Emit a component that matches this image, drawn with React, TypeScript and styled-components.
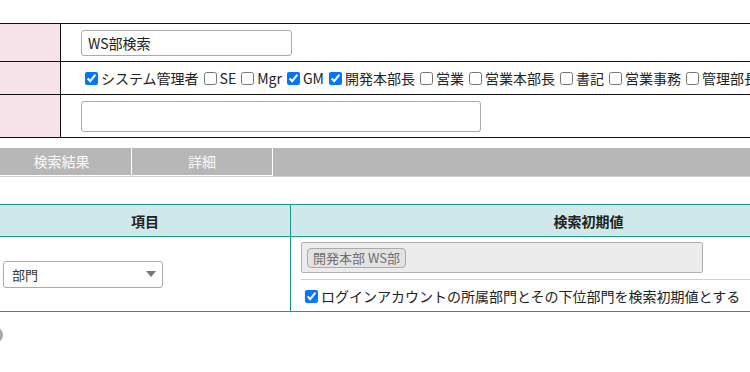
import styled, { createGlobalStyle } from 'styled-components';

const GlobalStyle = createGlobalStyle`
    html, body {
        margin: 0;
        padding: 0;
        width: 750px;
        height: 372px;
        overflow: hidden;
        background: #fff;
    }
    body {
        font-family: "Noto Sans CJK JP", "Noto Sans", sans-serif;
        font-size: 14px;
        color: #222;
    }
`;

const Page = styled.div`
    padding-top: 23px;
    width: 900px;
`;

const FormTable = styled.table`
    border-collapse: collapse;
    width: 900px;
`;

const Label = styled.th`
    width: 60px;
    padding: 0;
    background-color: #f6e3e9;
    border: 1px solid #111;
    border-left: none;
`;

const Field = styled.td<{ $h: number }>`
    height: ${props => props.$h}px;
    padding: 0 0 0 20px;
    border: 1px solid #111;
    border-right: none;
    vertical-align: middle;
`;

const TextInput = styled.input<{ $w: number; $h: number }>`
    box-sizing: border-box;
    display: block;
    width: ${props => props.$w}px;
    height: ${props => props.$h}px;
    padding: 0 6px;
    border: 1px solid #aaa;
    border-radius: 3px;
    font-family: "Noto Sans CJK JP", sans-serif;
    font-size: 14px;
    color: #222;
    outline: none;
`;

const CheckRow = styled.div`
    display: flex;
    align-items: center;
    white-space: nowrap;
    line-height: 18px;
`;

const Check = styled.label`
    display: inline-flex;
    align-items: center;
    margin-right: 1px;
`;

const Box = styled.input`
    width: 13px;
    height: 13px;
    margin: 0 3px 0 4px;
    accent-color: #0075ff;
`;

const TabBar = styled.div`
    display: flex;
    margin-top: 10px;
    height: 29px;
    background-color: #b7b7b7;
    border-bottom: 1px solid #d0d0d0;
    box-sizing: border-box;
`;

const Tab = styled.div<{ $w: number; $shift?: number }>`
    box-sizing: border-box;
    width: ${props => props.$w}px;
    height: 28px;
    padding-right: ${props => props.$shift ?? 0}px;
    line-height: 27px;
    text-align: center;
    color: #fafafa;
    font-size: 14px;
    border-right: 1px solid #fff;
    border-bottom: 1px solid #fff;
`;

const ResultTable = styled.table`
    margin-top: 27px;
    border-collapse: collapse;
    width: 886px;
`;

const HeadCell = styled.th<{ $w?: number }>`
    width: ${props => (props.$w ? `${props.$w}px` : 'auto')};
    height: 31px;
    padding: 0;
    background-color: #cfe9ea;
    border: 1px solid #199a8d;
    border-left: none;
    border-right-width: ${props => (props.$w ? '1px' : '0')};
    font-size: 14px;
    font-weight: bold;
    color: #222;
`;

const BodyCell = styled.td<{ $first?: boolean }>`
    height: 75px;
    padding: ${props => (props.$first ? '0 0 0 3px' : '5px 0 0 10px')};
    border: 1px solid #199a8d;
    border-left: none;
    border-right-width: ${props => (props.$first ? '1px' : '0')};
    vertical-align: ${props => (props.$first ? 'middle' : 'top')};
    box-sizing: border-box;
`;

const Select = styled.div`
    box-sizing: border-box;
    display: flex;
    align-items: center;
    justify-content: space-between;
    width: 160px;
    height: 27px;
    padding: 0 6px 0 8px;
    border: 1px solid #aaa;
    border-radius: 3px;
    font-size: 13px;
    color: #333;
`;

const Caret = styled.span`
    width: 0;
    height: 0;
    border-left: 5px solid transparent;
    border-right: 5px solid transparent;
    border-top: 6px solid #777;
`;

const TagBox = styled.div`
    box-sizing: border-box;
    display: flex;
    align-items: center;
    width: 402px;
    height: 31px;
    padding: 0 5px;
    background-color: #ececec;
    border: 1px solid #b0b0b0;
    border-radius: 2px;
`;

const Tag = styled.span`
    box-sizing: border-box;
    height: 20px;
    line-height: 18px;
    padding: 0 5px;
    border: 1px solid #aaa;
    border-radius: 4px;
    background-color: #e2e2e2;
    color: #707070;
    font-size: 13px;
`;

const Divider = styled.div`
    margin-top: 6px;
    border-top: 1px solid #cfcfcf;
`;

const DefaultCheck = styled.label`
    display: flex;
    align-items: center;
    margin-top: 8px;
    white-space: nowrap;
    line-height: 16px;
    font-size: 14px;
`;

const Knob = styled.div`
    margin: 15px 0 0 -13px;
    width: 16px;
    height: 16px;
    border-radius: 50%;
    background-color: #a8a8a8;
`;

const roles: [string, boolean][] = [
    ['システム管理者', true],
    ['SE', false],
    ['Mgr', false],
    ['GM', true],
    ['開発本部長', true],
    ['営業', false],
    ['営業本部長', false],
    ['書記', false],
    ['営業事務', false],
    ['管理部長', false],
];

const App = () => {
    return (
        <Page>
            <GlobalStyle />
            <FormTable>
                <tbody>
                    <tr>
                        <Label />
                        <Field $h={37}>
                            <TextInput $w={211} $h={26} defaultValue="WS部検索" />
                        </Field>
                    </tr>
                    <tr>
                        <Label />
                        <Field $h={32}>
                            <CheckRow>
                                {roles.map(([name, checked]) => (
                                    <Check key={name}>
                                        <Box type="checkbox" defaultChecked={checked} />
                                        {name}
                                    </Check>
                                ))}
                            </CheckRow>
                        </Field>
                    </tr>
                    <tr>
                        <Label />
                        <Field $h={42}>
                            <TextInput $w={400} $h={31} />
                        </Field>
                    </tr>
                </tbody>
            </FormTable>

            <TabBar>
                <Tab $w={132} $shift={8}>検索結果</Tab>
                <Tab $w={141}>詳細</Tab>
            </TabBar>

            <ResultTable>
                <thead>
                    <tr>
                        <HeadCell $w={290}>項目</HeadCell>
                        <HeadCell>検索初期値</HeadCell>
                    </tr>
                </thead>
                <tbody>
                    <tr>
                        <BodyCell $first>
                            <Select>
                                <span>部門</span>
                                <Caret />
                            </Select>
                        </BodyCell>
                        <BodyCell>
                            <TagBox>
                                <Tag>開発本部 WS部</Tag>
                            </TagBox>
                            <Divider />
                            <DefaultCheck>
                                <Box type="checkbox" defaultChecked />
                                ログインアカウントの所属部門とその下位部門を検索初期値とする
                            </DefaultCheck>
                        </BodyCell>
                    </tr>
                </tbody>
            </ResultTable>
            <Knob />
        </Page>
    );
};

export default App;
